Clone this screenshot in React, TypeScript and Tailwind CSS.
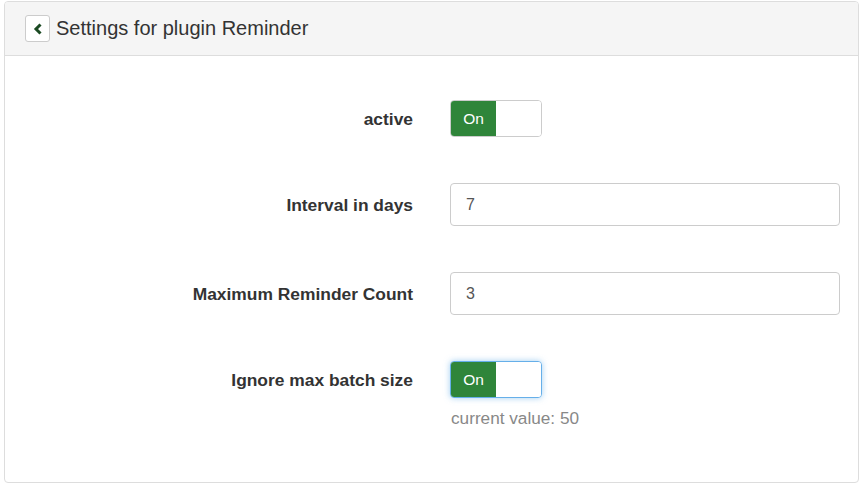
import { useState } from "react";

function Toggle({ on, focused }: { on: boolean; focused?: boolean }) {
  return (
    <div
      className={`flex w-[92px] h-[37px] rounded-[4px] overflow-hidden border bg-white ${
        focused ? "border-[#66afe9] shadow-[0_0_6px_rgba(102,175,233,0.6)]" : "border-[#cccccc]"
      }`}
    >
      <div className={`w-[45px] flex items-center justify-center text-[15.5px] ${on ? "bg-[#2f853a] text-white" : "bg-white text-[#333]"}`}>
        {on ? "On" : "Off"}
      </div>
      <div className="flex-1 bg-white" />
    </div>
  );
}

function Row({ label, h, children }: { label: string; h: string; children: React.ReactNode }) {
  return (
    <div className="flex items-start">
      <div className={`w-[408px] shrink-0 flex items-center justify-end pt-[2px] ${h}`}>
        <label className="font-bold text-[17.4px] text-[#333]">{label}</label>
      </div>
      <div className="ml-[37px] w-[390px]">{children}</div>
    </div>
  );
}

export default function App() {
  const [interval, setInterval] = useState("7");
  const [count, setCount] = useState("3");

  return (
    <div className="w-[863px] h-[486px] bg-white pt-[1px] px-[4px]" style={{ fontFamily: '"Liberation Sans", Arial, sans-serif' }}>
      <div className="h-[482px] border border-[#dddddd] rounded-[4px] overflow-hidden">
        <div className="h-[54px] bg-[#f5f5f5] border-b border-[#dddddd] flex items-center pl-[20px]">
          <button className="w-[25px] h-[27px] border border-[#cccccc] rounded-[3px] bg-white flex items-center justify-center">
            <svg width="10" height="12" viewBox="0 0 10 12">
              <path d="M7.5 1.5 L3 6 L7.5 10.5" fill="none" stroke="#1b4a22" strokeWidth="3" />
            </svg>
          </button>
          <h3 className="ml-[6px] text-[20px] text-[#333] mb-[2px]">Settings for plugin Reminder</h3>
        </div>
        <div className="pt-[44px] flex flex-col gap-[46px]">
          <Row label="active" h="h-[37px]">
            <Toggle on />
          </Row>
          <Row label="Interval in days" h="h-[43px]">
            <input
              className="w-full h-[43px] border border-[#cccccc] rounded-[4px] px-[15px] text-[16px] text-[#555] outline-none block"
              value={interval}
              onChange={(e) => setInterval(e.target.value)}
            />
          </Row>
          <Row label="Maximum Reminder Count" h="h-[43px]">
            <input
              className="w-full h-[43px] border border-[#cccccc] rounded-[4px] px-[15px] text-[16px] text-[#555] outline-none block"
              value={count}
              onChange={(e) => setCount(e.target.value)}
            />
          </Row>
          <Row label="Ignore max batch size" h="h-[37px]">
            <Toggle on focused />
            <p className="mt-[8px] ml-[1px] text-[17.2px] text-[#888]">current value: 50</p>
          </Row>
        </div>
      </div>
    </div>
  );
}
